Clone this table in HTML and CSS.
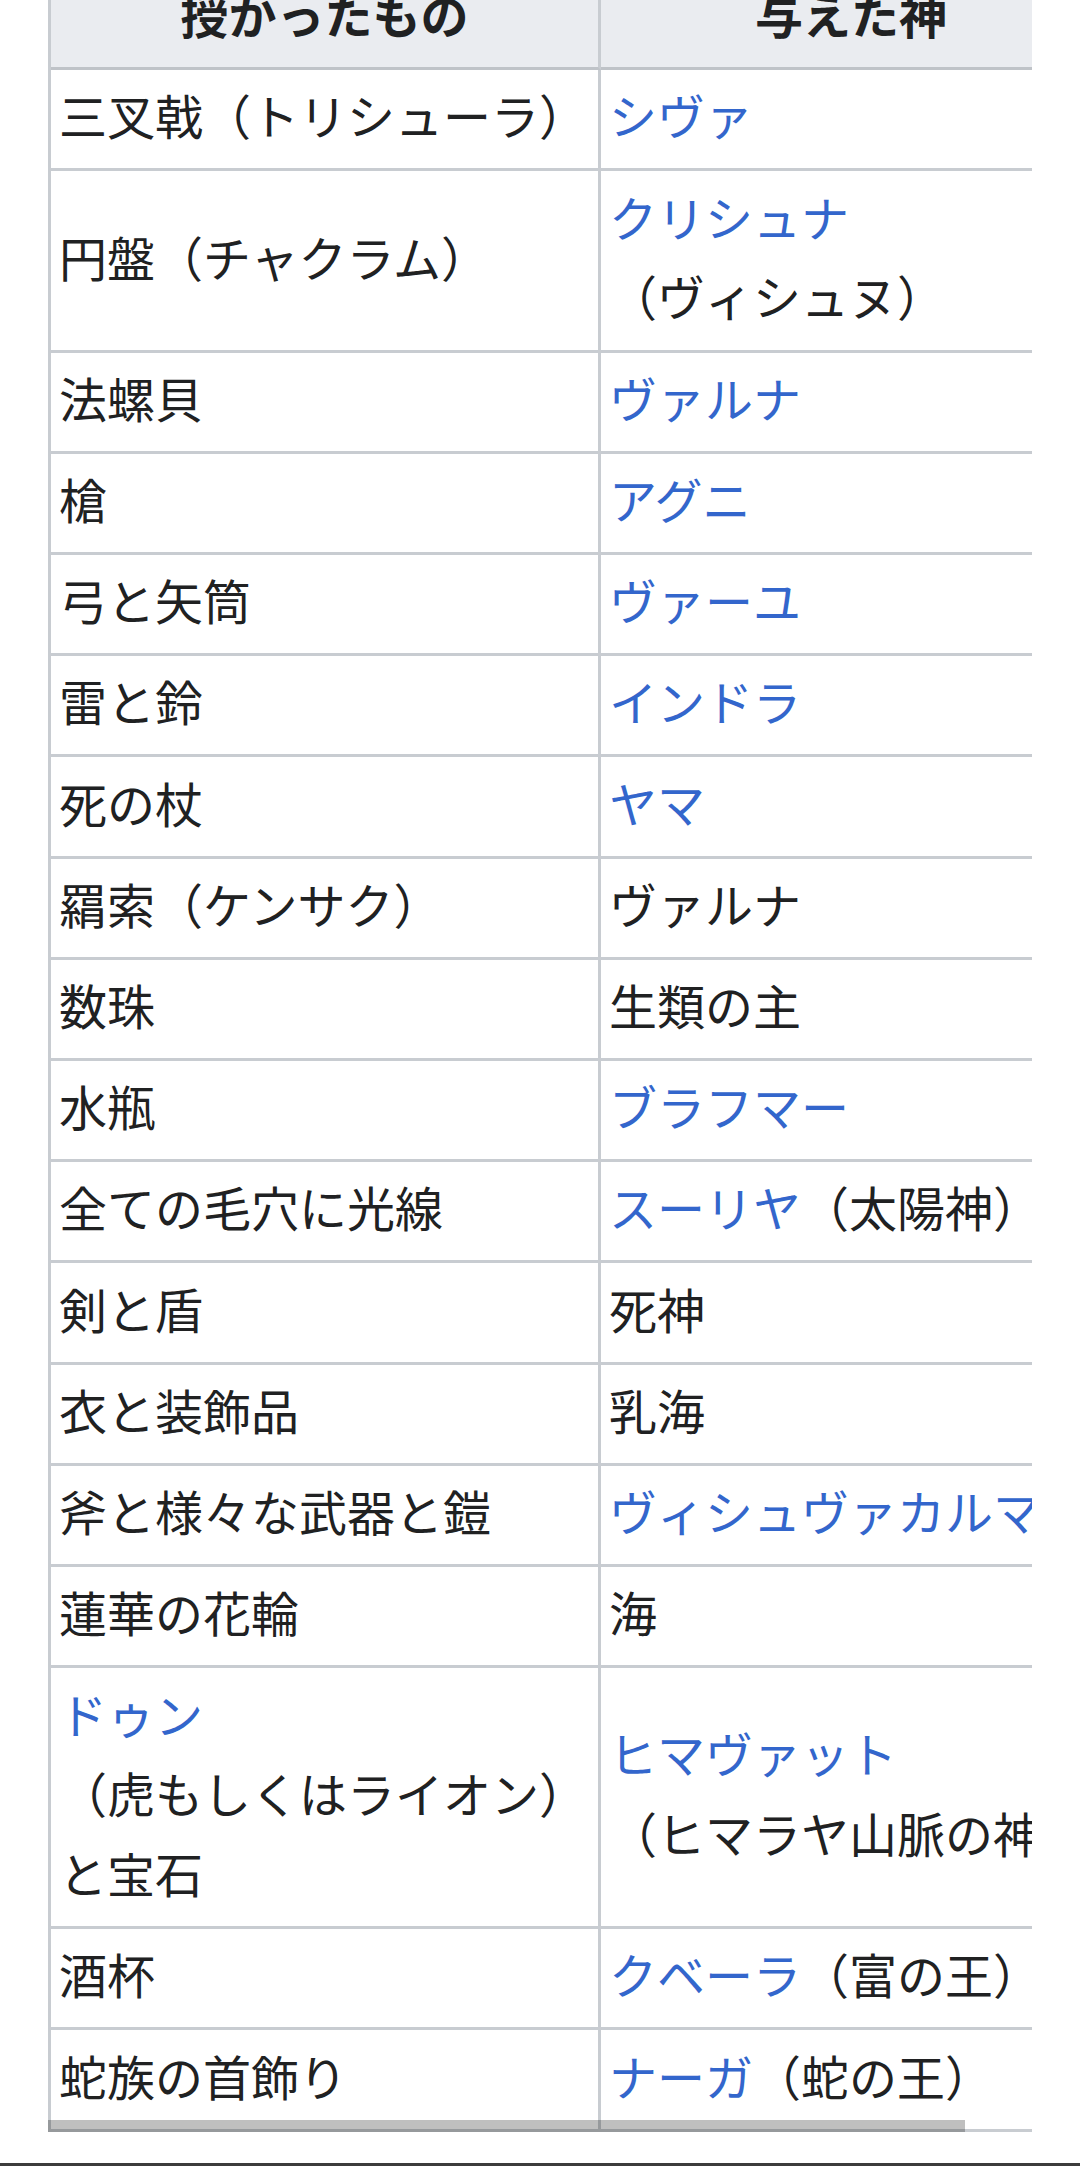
FILE: index.html
```html
<!DOCTYPE html>
<html lang="ja">
<head>
<meta charset="utf-8">
<title>授かったもの</title>
<link rel="stylesheet" href="styles.css">
</head>
<body>
<div class="page">
  <div class="table-scroll">
    <table class="wikitable">
      <thead>
        <tr>
          <th class="c1">授かったもの</th>
          <th class="c2">与えた神</th>
        </tr>
      </thead>
      <tbody>
        <tr><td>三叉戟（トリシューラ）</td><td><a href="#">シヴァ</a></td></tr>
        <tr><td>円盤（チャクラム）</td><td><a href="#">クリシュナ</a><br>（ヴィシュヌ）</td></tr>
        <tr><td>法螺貝</td><td><a href="#">ヴァルナ</a></td></tr>
        <tr><td>槍</td><td><a href="#">アグニ</a></td></tr>
        <tr><td>弓と矢筒</td><td><a href="#">ヴァーユ</a></td></tr>
        <tr><td>雷と鈴</td><td><a href="#">インドラ</a></td></tr>
        <tr><td>死の杖</td><td><a href="#">ヤマ</a></td></tr>
        <tr><td>羂索（ケンサク）</td><td>ヴァルナ</td></tr>
        <tr><td>数珠</td><td>生類の主</td></tr>
        <tr><td>水瓶</td><td><a href="#">ブラフマー</a></td></tr>
        <tr><td>全ての毛穴に光線</td><td><a href="#">スーリヤ</a>（太陽神）</td></tr>
        <tr><td>剣と盾</td><td>死神</td></tr>
        <tr><td>衣と装飾品</td><td>乳海</td></tr>
        <tr><td>斧と様々な武器と鎧</td><td><a href="#">ヴィシュヴァカルマン</a></td></tr>
        <tr><td>蓮華の花輪</td><td>海</td></tr>
        <tr><td><a href="#">ドゥン</a><br>（虎もしくはライオン）<br>と宝石</td><td><a href="#">ヒマヴァット</a><br>（ヒマラヤ山脈の神）</td></tr>
        <tr><td>酒杯</td><td><a href="#">クベーラ</a>（富の王）</td></tr>
        <tr><td>蛇族の首飾り</td><td><a href="#">ナーガ</a>（蛇の王）</td></tr>
      </tbody>
    </table>
    <div class="scroll-thumb"></div>
  </div>
  <div class="nav-edge"></div>
</div>
</body>
</html>
```

FILE: styles.css
```css
html, body {
  margin: 0;
  padding: 0;
  background: #ffffff;
}

body {
  font-family: "Noto Sans CJK JP", "Noto Sans", sans-serif;
  color: #202122;
  font-size: 48px;
}

.page {
  padding: 0 48px;
  display: flex;
  flex-direction: column;
}

.table-scroll {
  position: relative;
  overflow: hidden;
  margin-top: -34px;
}

.wikitable {
  border-collapse: separate;
  border-spacing: 0;
  table-layout: fixed;
  width: 1056px;
  border-left: 3px solid #c8ccd1;
  border-top: 3px solid #c8ccd1;
}

.wikitable th,
.wikitable td {
  box-sizing: border-box;
  padding: 5.2px 8px 13.2px;
  line-height: 79.85px;
  border-right: 3px solid #c8ccd1;
  border-bottom: 3px solid #c8ccd1;
  vertical-align: middle;
  white-space: nowrap;
}

.wikitable th {
  background: #eaecf0;
  font-weight: bold;
  text-align: center;
  border-bottom-color: #bfc3c8;
}

.wikitable td {
  text-align: left;
}

.wikitable th.c1 {
  width: 550px;
}

.wikitable th.c2 {
  width: 503px;
}

.wikitable a {
  color: #3366cc;
  text-decoration: none;
}

.scroll-thumb {
  position: absolute;
  left: 0;
  bottom: 0;
  width: 917px;
  height: 12px;
  background: rgba(0, 0, 0, 0.25);
}

.nav-edge {
  margin: 31px -48px 0;
  height: 3px;
  background: #3c3c3c;
}
```
